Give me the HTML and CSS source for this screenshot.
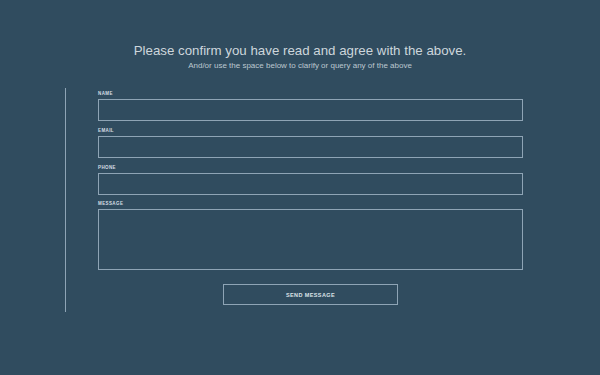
FILE: index.html
```html
<!DOCTYPE html>
<html lang="en">
<head>
  <meta charset="UTF-8" />
  <meta name="viewport" content="width=device-width, initial-scale=1.0"/>
  <title>Confirm</title>
  <link rel="stylesheet" href="styles.css">
</head>
<body>
  <div class="intro">
    <h2>Please confirm you have read and agree with the above.</h2>
    <p>And/or use the space below to clarify or query any of the above</p>
  </div>
  <form class="contact">
    <label class="field">Name
      <input type="text" />
    </label>
    <label class="field">Email
      <input type="text" />
    </label>
    <label class="field">Phone
      <input type="text" />
    </label>
    <label class="field">Message
      <textarea></textarea>
    </label>
    <div class="actions">
      <button type="button">Send Message</button>
    </div>
  </form>
</body>
</html>
```

FILE: styles.css
```css
body {
  margin: 0;
  background: #304c5f;
  font-family: "Liberation Sans", Arial, sans-serif;
  color: #cdd6dc;
  height: 375px;
  overflow: hidden;
}
.intro {
  padding-top: 43px;
  text-align: center;
}
.intro h2 {
  margin: 0 0 2px;
  font-size: 13.3px;
  line-height: 16px;
  font-weight: normal;
}
.intro p {
  margin: 0;
  font-size: 8px;
  line-height: 10px;
  color: #bcc8d0;
}
.contact {
  margin: 17px 0 0 65px;
  width: 425px;
  border-left: 1px solid #8ea4b5;
  padding: 3px 0 7px 32px;
}
.field {
  display: flex;
  flex-direction: column;
  gap: 2px;
  margin-bottom: 7px;
  font-size: 4.5px;
  line-height: 6px;
  font-weight: bold;
  text-transform: uppercase;
  letter-spacing: 0.4px;
  color: #d6dee4;
}
.field input,
.field textarea {
  box-sizing: border-box;
  width: 425px;
  height: 22px;
  margin: 0;
  background: transparent;
  border: 1px solid #8ea4b5;
  border-radius: 0;
  resize: none;
}
.field:nth-child(4) {
  margin-top: -1px;
}
.field textarea {
  height: 61px;
}
.actions {
  display: flex;
  justify-content: center;
  padding-top: 7px;
}
.actions button {
  width: 175px;
  height: 21px;
  background: transparent;
  border: 1px solid #8ea4b5;
  color: #dde3e8;
  font-family: "Liberation Sans", Arial, sans-serif;
  font-size: 5.5px;
  font-weight: bold;
  letter-spacing: 0.4px;
  text-transform: uppercase;
}
```
